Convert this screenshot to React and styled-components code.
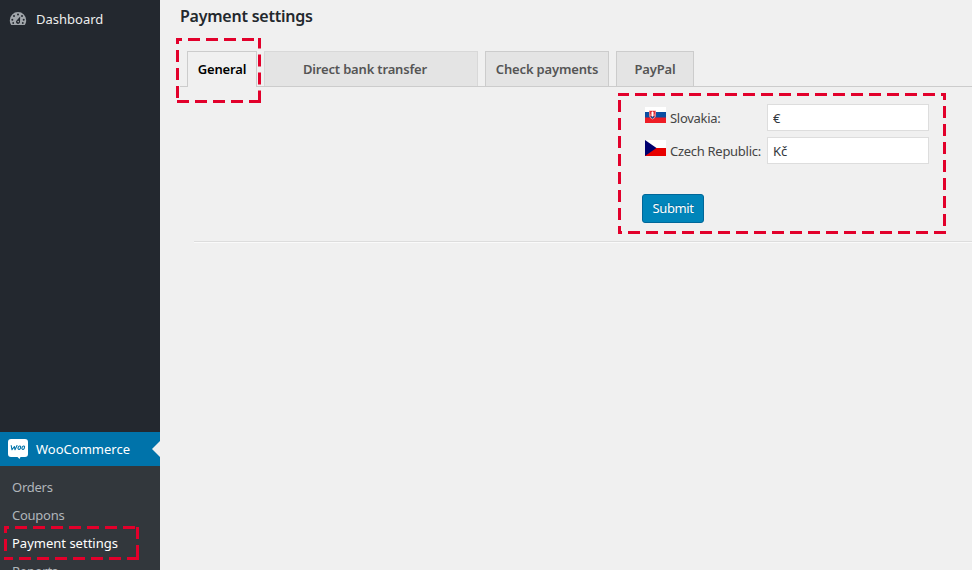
import React from "react";
import styled, { createGlobalStyle } from "styled-components";

const Global = createGlobalStyle`
  * { box-sizing: border-box; }
  body { margin: 0; background: #f0f0f0; font-family: "Noto Sans", "Open Sans", sans-serif; font-size: 13px; overflow: hidden; }
`;

const Page = styled.div`
  position: relative;
  display: flex;
  width: 972px;
  height: 570px;
  overflow: hidden;
`;

const Sidebar = styled.nav`
  display: flex;
  flex-direction: column;
  justify-content: space-between;
  width: 160px;
  height: 570px;
  overflow: hidden;
  background: #23282f;
`;

const MenuItem = styled.a`
  position: relative;
  display: flex;
  align-items: center;
  gap: 8px;
  height: ${(p) => (p.$active ? 34 : 38)}px;
  padding-left: 8px;
  color: ${(p) => (p.$active ? "#fff" : "#eee")};
  background: ${(p) => (p.$active ? "#0073aa" : "transparent")};
  & > svg { flex: none; }
`;

const Pointer = styled.span`
  position: absolute;
  right: 0;
  top: 9px;
  border: 8px solid transparent;
  border-left: 0;
  border-right-color: #f0f0f0;
`;

const Submenu = styled.div`
  height: 104px;
  padding: 7px 12px 0;
  overflow: hidden;
  background: #32373c;
`;

const SubItem = styled.a`
  display: block;
  height: 28px;
  line-height: 28px;
  color: ${(p) => (p.$active ? "#fff" : "#b0b5ba")};
  letter-spacing: ${(p) => (p.$active ? 0 : -0.25)}px;
  white-space: nowrap;
`;

const Main = styled.main`
  flex: 1;
  min-width: 0;
`;

const Title = styled.h1`
  margin: 0;
  padding: 5px 0 0 20px;
  height: 51px;
  font-size: 16px;
  line-height: 22px;
  font-weight: 600;
  letter-spacing: -0.24px;
  color: #23282d;
`;

const Tabs = styled.div`
  display: flex;
  gap: 7px;
  height: 36px;
  margin-left: 20px;
  padding-left: 7px;
  border-bottom: 1px solid #ccc;
`;

const Tab = styled.a`
  width: ${(p) => p.$width}px;
  height: ${(p) => (p.$active ? 36 : 35)}px;
  padding-right: ${(p) => p.$shift || 0}px;
  border: 1px solid ${(p) => (p.$soft ? "#d8d8d8" : "#ccc")};
  border-bottom: 0;
  background: ${(p) => (p.$active ? "#f0f0f0" : "#e4e4e4")};
  color: ${(p) => (p.$active ? "#000" : "#555")};
  font-weight: 600;
  line-height: 35px;
  letter-spacing: -0.17px;
  text-align: center;
  white-space: nowrap;
`;

const Panel = styled.form`
  display: flex;
  flex-direction: column;
  align-items: flex-start;
  gap: 5px;
  height: 155px;
  margin-left: 34px;
  padding: 17px 0 0 448px;
  border-bottom: 1px solid #ddd;
  box-shadow: 0 1px 0 #fafafa;
`;

const Field = styled.label`
  display: flex;
  height: 28px;
  padding-left: 3px;
  color: #444;
  & > svg { flex: none; margin-top: 3px; }
`;

const FieldName = styled.span`
  width: 97px;
  margin-left: 4px;
  line-height: 29px;
  letter-spacing: -0.29px;
  white-space: nowrap;
`;

const Input = styled.input`
  width: 162px;
  height: 27px;
  padding: 0 5px;
  border: 1px solid #ddd;
  background: #fff;
  color: #32373c;
  font: inherit;
  outline: 0;
`;

const Submit = styled.button`
  width: 62px;
  height: 29px;
  margin-top: 24px;
  padding: 0 0 2px;
  border: 1px solid #006799;
  border-radius: 3px;
  background: #0085ba;
  color: #fff;
  font: inherit;
  letter-spacing: -0.4px;
  text-shadow: 0 -1px 1px #006799;
`;

const Highlights = styled.svg`
  position: absolute;
  inset: 0;
  pointer-events: none;
`;

/* Dashed frame; each side is [coordinate where one of its dashes starts]. */
function Frame({ x, y, w, h, top, right, bottom, left }) {
  const offset = (from, start) => (((from - start) % 18) + 18) % 18;
  const r = x + w;
  const b = y + h;
  return (
    <g>
      <path d={`M${x} ${y + 1.5}H${r}`} strokeDashoffset={offset(x, top)} />
      <path d={`M${r - 1.5} ${y}V${b}`} strokeDashoffset={offset(y, right)} />
      <path d={`M${x} ${b - 1.5}H${r}`} strokeDashoffset={offset(x, bottom)} />
      <path d={`M${x + 1.5} ${y}V${b}`} strokeDashoffset={offset(y, left)} />
    </g>
  );
}

function Gauge() {
  return (
    <svg width="20" height="20" viewBox="0 0 20 20">
      <path fill="#a0a5aa" d="M3.300 16h13.400c1-1.400 1.500-2.900 1.500-4.700a8.200 8.200 0 0 0-16.400 0c0 1.800.5 3.300 1.500 4.700z" />
      <g fill="#23282f">
        <circle cx="10" cy="5.400" r="1" />
        <circle cx="6" cy="7" r="1" />
        <circle cx="14" cy="7" r="1" />
        <circle cx="4.300" cy="10.800" r="1" />
        <circle cx="15.700" cy="10.800" r="1" />
        <circle cx="5.200" cy="14" r=".9" />
        <circle cx="14.800" cy="14" r=".9" />
        <path d="M12.200 7.500 12 13a2 2 0 1 1-3.600-1.300z" />
      </g>
      <circle cx="10.200" cy="12.600" r=".8" fill="#a0a5aa" />
    </svg>
  );
}

function WooBubble() {
  return (
    <svg width="20" height="20" viewBox="0 0 20 20">
      <path fill="#fff" d="M3 0h14a3 3 0 0 1 3 3v12a3 3 0 0 1-3 3h-4.500l-1 2-2-2H3a3 3 0 0 1-3-3V3a3 3 0 0 1 3-3z" />
      <g fill="none" stroke="#0073aa" strokeWidth="1.100" strokeLinecap="round" strokeLinejoin="round">
        <path d="M3.200 6.500 4 10.800 6.400 7.500 7 10.800 9 6.500" />
        <ellipse cx="11.300" cy="8.700" rx="1.200" ry="1.800" transform="rotate(25 11.300 8.700)" />
        <ellipse cx="15.200" cy="8.700" rx="1.200" ry="1.800" transform="rotate(25 15.200 8.700)" />
      </g>
    </svg>
  );
}

function SlovakFlag() {
  return (
    <svg width="21" height="16" viewBox="0 0 21 16">
      <path fill="#fff" d="M0 0h21v5H0z" />
      <path fill="#0b4ea2" d="M0 5h21v6H0z" />
      <path fill="#ee1c25" d="M0 10.500h21V16H0z" />
      <path fill="#f3a9ad" d="M4 3.500h7v4.200c0 2.400-1.800 3.900-3.500 4.800C5.800 11.600 4 10.100 4 7.700z" />
      <path fill="#e0303a" d="M4.600 4h5.800v3.700c0 1.900-1.400 3.100-2.900 4-1.500-.9-2.900-2.100-2.900-4z" />
      <path stroke="#fff" fill="none" d="M7.500 4.500v5.500M6 6h3M5.500 8h4" />
      <path fill="#0b4ea2" d="M5.500 9.800q1-.9 2 0 1-.9 2 0-.7 1.100-2 1.900-1.300-.8-2-1.900z" />
    </svg>
  );
}

function CzechFlag() {
  return (
    <svg width="21" height="16" viewBox="0 0 21 16">
      <path fill="#fff" d="M0 0h21v8H0z" />
      <path fill="#e80000" d="M0 8h21v8H0z" />
      <path fill="#00006e" d="M0 0l11.500 8L0 16z" />
    </svg>
  );
}

export default function App() {
  return (
    <Page>
      <Global />
      <Sidebar>
        <MenuItem><Gauge />Dashboard</MenuItem>
        <div>
          <MenuItem $active><WooBubble />WooCommerce<Pointer /></MenuItem>
          <Submenu>
            <SubItem>Orders</SubItem>
            <SubItem>Coupons</SubItem>
            <SubItem $active>Payment settings</SubItem>
            <SubItem>Reports</SubItem>
          </Submenu>
        </div>
      </Sidebar>
      <Main>
        <Title>Payment settings</Title>
        <Tabs>
          <Tab $active $width={70}>General</Tab>
          <Tab $soft $width={214} $shift={12}>Direct bank transfer</Tab>
          <Tab $width={124}>Check payments</Tab>
          <Tab $width={78}>PayPal</Tab>
        </Tabs>
        <Panel>
          <Field><SlovakFlag /><FieldName>Slovakia:</FieldName><Input defaultValue="€" /></Field>
          <Field><CzechFlag /><FieldName>Czech Republic:</FieldName><Input defaultValue="Kč" /></Field>
          <Submit type="button">Submit</Submit>
        </Panel>
      </Main>
      <Highlights width="972" height="570" fill="none" stroke="#e2002b" strokeWidth="3" strokeDasharray="12 6">
        <Frame x={176} y={38} w={85} h={65} top={188} right={54.5} bottom={177} left={50} />
        <Frame x={618} y={93} w={328} h={141} top={617} right={106} bottom={628} left={100} />
        <Frame x={4} y={526} w={135} h={34} top={15} right={527} bottom={1} left={539} />
      </Highlights>
    </Page>
  );
}
